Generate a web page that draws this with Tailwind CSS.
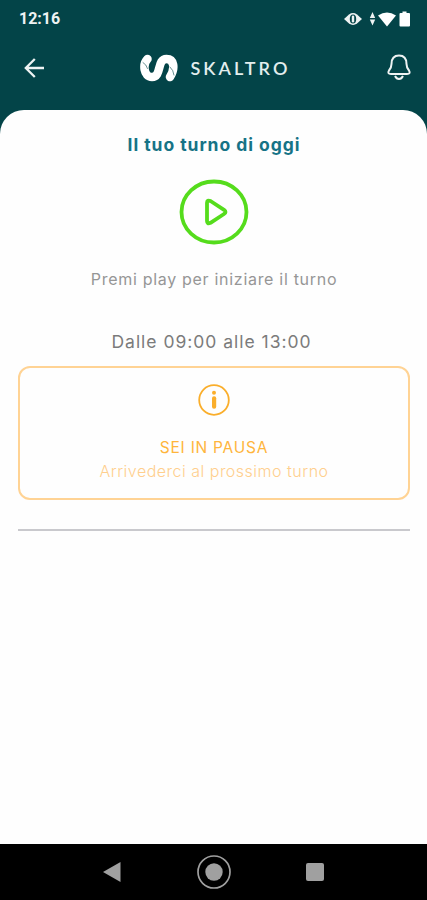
<!DOCTYPE html>
<html lang="it">
<head>
  <meta charset="UTF-8">
  <meta name="viewport" content="width=device-width, initial-scale=1.0">
  <title>Skaltro</title>
  <script src="https://cdn.jsdelivr.net/npm/@tailwindcss/browser@4"></script>
</head>
<body class="bg-[#034448] font-['Inter',sans-serif]">
  <div class="flex flex-col w-[427px] h-[900px] overflow-hidden">

    <!-- Status bar -->
    <div class="h-9 shrink-0 flex items-center justify-between pl-[19px] pr-4 pt-px text-[#eef3f3]">
      <span class="font-['Roboto',sans-serif] font-bold text-base leading-none">12:16</span>
      <svg class="w-[67px] h-4" viewBox="0 0 67 16" fill="currentColor">
        <path d="M0 8 5 3.400Q9 .8 13 3.400L18 8l-5 4.600Q9 15.200 5 12.600Z"/>
        <ellipse cx="9" cy="8" rx="3.200" ry="4.500" fill="#034448"/>
        <rect x="7.800" y="4.500" width="2.400" height="7" rx="1.200"/>
        <path d="M28.500 1 31.200 7h-5.400ZM28.500 14.500 31.200 8.500h-5.400Z"/>
        <path fill="#fff" d="M34 4.500Q43-1.500 52 4.500L43 15.500Z"/>
        <path fill="#fff" d="M58.500.5h4V2H65q1 0 1 1v11.500q0 1-1 1h-8.500q-1 0-1-1V3q0-1 1-1h2Z"/>
      </svg>
    </div>

    <!-- App bar -->
    <header class="h-[74px] shrink-0 flex justify-between pt-[15px] pl-[24px] pr-[15px]">
      <svg class="w-5 h-[34px]" viewBox="0 0 20 34" fill="none" stroke="#eef3f3" stroke-width="2.300">
        <path d="M20 17H2M10.800 8 1.800 17l9 9"/>
      </svg>
      <div class="flex items-center h-[34px] -ml-[2px]">
        <svg class="w-[38px] h-[30px]" viewBox="0 0 38 30" fill="none" stroke-linecap="round">
          <path d="M7.500 6C2.500 11 3.500 24 12 24C22 24 16.500 6 26.500 6C34 6 35.500 15 30 24" stroke="#fff" stroke-width="8.500"/>
          <path d="M3 9.500Q6.500 11.500 7.500 15.500M30 14Q33.500 17 34 22" stroke="#034448" stroke-width=".6"/>
        </svg>
        <span class="ml-[12px] -mr-[3px] font-['Lato',sans-serif] font-semibold text-[18px] leading-none tracking-[3.100px] text-[#e3eeee]">SKALTRO</span>
      </div>
      <svg class="w-[26px] h-[34px]" viewBox="0 0 26 34" fill="none" stroke="#eef3f3" stroke-width="2" stroke-linejoin="round">
        <path d="M5.500 13Q5.500 4.500 13 4.500T20.500 13Q20.500 16.500 23 19.500Q25 23 21 23H5Q1 23 3 19.500Q5.500 16.500 5.500 13Z"/>
        <path d="M9 25Q10.500 28 13 28T17 25"/>
      </svg>
    </header>

    <!-- Content -->
    <main class="flex-1 bg-[#fefefe] rounded-t-[24px] pl-[18px] pr-[17px] flex flex-col items-center text-center whitespace-nowrap">
      <h1 class="mt-[25px] h-5 leading-5 font-bold text-[17.5px] tracking-[0.950px] text-[#167386]">Il tuo turno di oggi</h1>
      <svg class="mt-[24px] w-[70px] h-[66px]" viewBox="0 0 70 66" fill="none" stroke="#55dc1c">
        <ellipse cx="35" cy="33" rx="32.500" ry="30.500" stroke-width="3.800"/>
        <path d="M28 24v18q0 3.500 3.500 1.800L45 35q3-2 0-4.200L31.500 22Q28 20.500 28 24Z" stroke-width="3.800" stroke-linejoin="round"/>
      </svg>
      <p class="mt-[24px] h-5 leading-5 text-base tracking-[0.700px] text-[#969696]">Premi play per iniziare il turno</p>
      <p class="mt-[43px] h-5 leading-5 text-[17.5px] tracking-[0.980px] text-[#7b7b7b] -ml-[5px]">Dalle 09:00 alle 13:00</p>

      <!-- Pause notice -->
      <section class="mt-[14px] w-full h-[134px] shrink-0 flex flex-col items-center rounded-[12px] border-2 border-[#ffd394]">
        <svg class="mt-4 w-8 h-8" viewBox="0 0 32 32">
          <circle cx="16" cy="16" r="14.800" fill="none" stroke="#faae2b" stroke-width="1.800"/>
          <circle cx="16" cy="8.800" r="2" fill="#faae2b"/>
          <rect x="14" y="12.300" width="4.200" height="12.500" rx="2" fill="#faae2b"/>
        </svg>
        <p class="mt-[22px] h-5 leading-5 text-[15.5px] tracking-[0.750px] text-[#ffb53c]">SEI IN PAUSA</p>
        <p class="mt-[3px] h-5 leading-5 font-light text-[16px] tracking-[0.500px] text-[#ffcf8d]">Arrivederci al prossimo turno</p>
      </section>
      <div class="mt-[29px] w-full h-[2px] bg-[#c9c9cd]"></div>
    </main>

    <!-- Navigation bar -->
    <nav class="h-14 shrink-0 bg-black flex items-center justify-between px-[103px]">
      <svg class="w-[18px] h-5" viewBox="0 0 18 20"><path d="M0 10 17.500 0v20Z" fill="#a0a0a0"/></svg>
      <svg class="w-[34px] h-[34px]" viewBox="0 0 34 34">
        <circle cx="17" cy="17" r="16" fill="none" stroke="#a0a0a0" stroke-width="1.700"/>
        <circle cx="17" cy="17" r="8.700" fill="#a0a0a0"/>
      </svg>
      <div class="w-[18px] h-[18px] rounded-[2px] bg-[#a0a0a0]"></div>
    </nav>
  </div>
</body>
</html>
